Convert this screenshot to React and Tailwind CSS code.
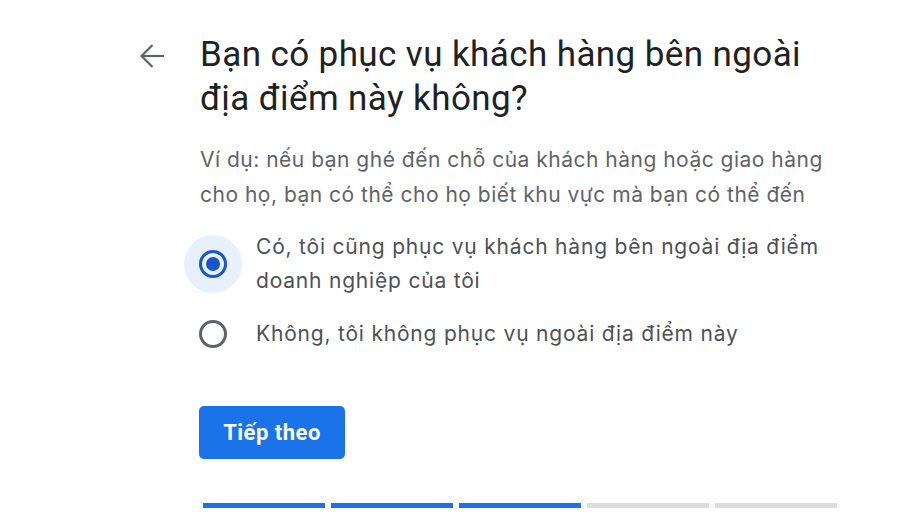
import React from "react";

export default function App() {
  const bars = [true, true, true, false, false];
  return (
    <div className="w-[900px] h-[529px] bg-white overflow-hidden" style={{ fontFamily: "Roboto, 'Noto Sans', sans-serif" }}>
      <div className="flex pl-[140px] pt-[33px]">
        <div className="w-[60px] pt-[11px]">
          <svg width="24" height="24" viewBox="0 0 24 24" fill="none" stroke="#5f6368" strokeWidth="2.2" strokeLinecap="butt">
            <path d="M24 12H1.5" />
            <path d="M12.5 1L1.5 12l11 11" />
          </svg>
        </div>
        <div className="flex flex-col">
          <h1 className="text-[35px] leading-[44px] tracking-[0.4px] text-[#202124] font-normal">
            Bạn có phục vụ khách hàng bên ngoài
            <br />
            địa điểm này không?
          </h1>
          <p className="mt-[21px] text-[21px] leading-[35px] tracking-[0.5px] text-[#5f6368]" style={{ fontFamily: "Inter, Roboto, sans-serif" }}>
            Ví dụ: nếu bạn ghé đến chỗ của khách hàng hoặc giao hàng
            <br />
            cho họ, bạn có thể cho họ biết khu vực mà bạn có thể đến
          </p>
          <div className="mt-[18px] flex flex-col" style={{ fontFamily: "Inter, Roboto, sans-serif" }}>
            <div className="flex items-center -ml-[16px]">
              <div className="w-[58px] h-[58px] rounded-full bg-[#e8f0fe] flex items-center justify-center shrink-0">
                <div className="w-[28px] h-[28px] rounded-full border-[3.5px] border-[#1a56c8] flex items-center justify-center">
                  <div className="w-[14px] h-[14px] rounded-full bg-[#1a56c8]" />
                </div>
              </div>
              <div className="ml-[14px] text-[21px] leading-[34px] tracking-[0.8px] text-[#4d5156]">
                Có, tôi cũng phục vụ khách hàng bên ngoài địa điểm
                <br />
                doanh nghiệp của tôi
              </div>
            </div>
            <div className="flex items-center -ml-[16px] mt-[19px]">
              <div className="w-[58px] h-[34px] flex items-center justify-center shrink-0">
                <div className="w-[28px] h-[28px] rounded-full border-[3.5px] border-[#5f6368]" />
              </div>
              <div className="ml-[14px] text-[21px] leading-[34px] tracking-[0.8px] text-[#4d5156]">
                Không, tôi không phục vụ ngoài địa điểm này
              </div>
            </div>
          </div>
          <div className="mt-[55px]">
            <button className="w-[146px] h-[53px] rounded-[5px] bg-[#1a73e8] text-white text-[22px] tracking-[0.5px] font-bold -ml-[1px]">
              Tiếp theo
            </button>
          </div>
          <div className="mt-[44px] flex gap-[6px] ml-[3px]">
            {bars.map((on, i) => (
              <div key={i} className={on ? "w-[122px] h-[5px] bg-[#1a73e8]" : "w-[122px] h-[5px] bg-[#dadce0]"} />
            ))}
          </div>
        </div>
      </div>
    </div>
  );
}
